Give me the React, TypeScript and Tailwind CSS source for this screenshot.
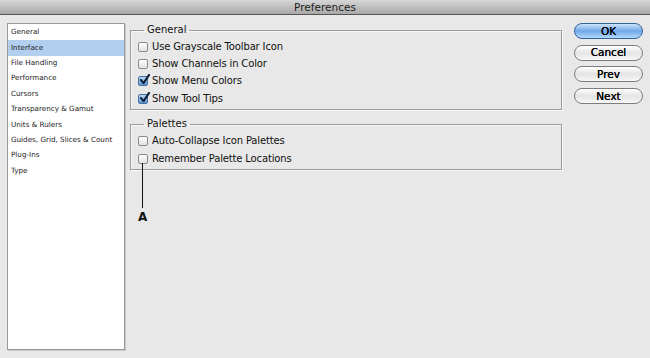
import React from "react";

const font = { fontFamily: '"DejaVu Sans", "Liberation Sans", sans-serif' };

const categories = [
  "General",
  "Interface",
  "File Handling",
  "Performance",
  "Cursors",
  "Transparency & Gamut",
  "Units & Rulers",
  "Guides, Grid, Slices & Count",
  "Plug-Ins",
  "Type",
];

function Checkbox({ checked = false }: { checked?: boolean }) {
  return (
    <span
      className={`relative inline-block w-[10px] h-[10px] shrink-0 rounded-[2px] border ${
        checked
          ? "border-[#4a6f9c] bg-gradient-to-b from-[#b9d7f5] to-[#5b97d6]"
          : "border-[#8a8a8a] bg-gradient-to-b from-white to-[#e2e2e2]"
      }`}
    >
      {checked && (
        <svg
          viewBox="0 0 12 12"
          className="absolute left-[0px] top-[-3px] w-[11px] h-[11px]"
        >
          <path
            d="M2 6.5 L5 10 L11 1"
            fill="none"
            stroke="#0d1d3a"
            strokeWidth="2.2"
            strokeLinecap="round"
            strokeLinejoin="round"
          />
        </svg>
      )}
    </span>
  );
}

function Option({
  label,
  checked,
  rowClass = "h-[17.3px]",
}: {
  label: string;
  checked?: boolean;
  rowClass?: string;
}) {
  return (
    <div className={`flex items-center gap-[4px] pl-[7px] text-[10px] tracking-[-0.15px] text-[#111] ${rowClass}`}>
      <Checkbox checked={checked} />
      <span className="leading-none">{label}</span>
    </div>
  );
}

function Group({
  title,
  children,
  className = "",
}: {
  title: string;
  children: React.ReactNode;
  className?: string;
}) {
  return (
    <fieldset
      className={`border border-[#9c9c9c] shadow-[inset_1px_1px_0_#f8f8f8,1px_1px_0_#f8f8f8] ${className}`}
    >
      <legend className="ml-[13px] px-[3px] text-[10px] leading-[14px] text-[#111]">
        {title}
      </legend>
      {children}
    </fieldset>
  );
}

function AquaButton({ label, primary = false }: { label: string; primary?: boolean }) {
  return (
    <button
      className={`h-[16px] w-[69px] rounded-full border text-[10.5px] leading-none text-black [text-shadow:0_0_0.4px_#000] ${
        primary
          ? "border-[#35619c] bg-gradient-to-b from-[#cfe4fb] via-[#6fa8e8] to-[#b2d9fc]"
          : "border-[#7d7d7d] bg-gradient-to-b from-white via-[#e4e4e4] to-[#f7f7f7]"
      }`}
    >
      {label}
    </button>
  );
}

export default function App() {
  return (
    <div
      className="w-[650px] h-[358px] bg-[#e8e8e8] flex flex-col overflow-hidden"
      style={font}
    >
      {/* Title bar */}
      <div className="h-[15px] shrink-0 flex items-center justify-center bg-gradient-to-b from-[#d6d6d6] to-[#a8a8a8] border-b border-[#555]">
        <span className="text-[10.5px] leading-none text-[#1a1a1a]">
          Preferences
        </span>
      </div>

      <div className="flex flex-1 pt-[8px] pl-[7px] pb-[8px]">
        {/* Category list */}
        <div className="w-[118px] pt-[1px] bg-white border border-[#9a9a9a] shadow-[1px_1px_0_#c8c8c8]">
          {categories.map((c) => (
            <div
              key={c}
              className={`h-[15.4px] flex items-center pl-[3px] text-[7.2px] text-[#222] ${
                c === "Interface" ? "bg-[#b3cff0]" : ""
              }`}
            >
              {c}
            </div>
          ))}
        </div>

        {/* Settings */}
        <div className="relative ml-[5px] w-[432px] flex flex-col">
          <Group title="General" className="pt-[1px] pb-[2px]">
            <Option label="Use Grayscale Toolbar Icon" />
            <Option label="Show Channels in Color" />
            <Option label="Show Menu Colors" checked />
            <Option label="Show Tool Tips" checked />
          </Group>
          <Group title="Palettes" className="mt-[7px] pt-[1px] pb-[1px]">
            <Option label="Auto-Collapse Icon Palettes" rowClass="h-[18px]" />
            <Option label="Remember Palette Locations" rowClass="h-[18px]" />
          </Group>

          {/* Callout A */}
          <div className="absolute left-[12px] top-[140px] w-[1px] h-[45px] bg-[#111]" />
          <div className="absolute left-[8px] top-[188px] text-[12px] leading-none font-bold text-[#111]">
            A
          </div>
        </div>

        {/* Buttons */}
        <div className="ml-[12px] flex flex-col gap-[5.7px]">
          <AquaButton label="OK" primary />
          <AquaButton label="Cancel" />
          <AquaButton label="Prev" />
          <AquaButton label="Next" />
        </div>
      </div>
    </div>
  );
}
